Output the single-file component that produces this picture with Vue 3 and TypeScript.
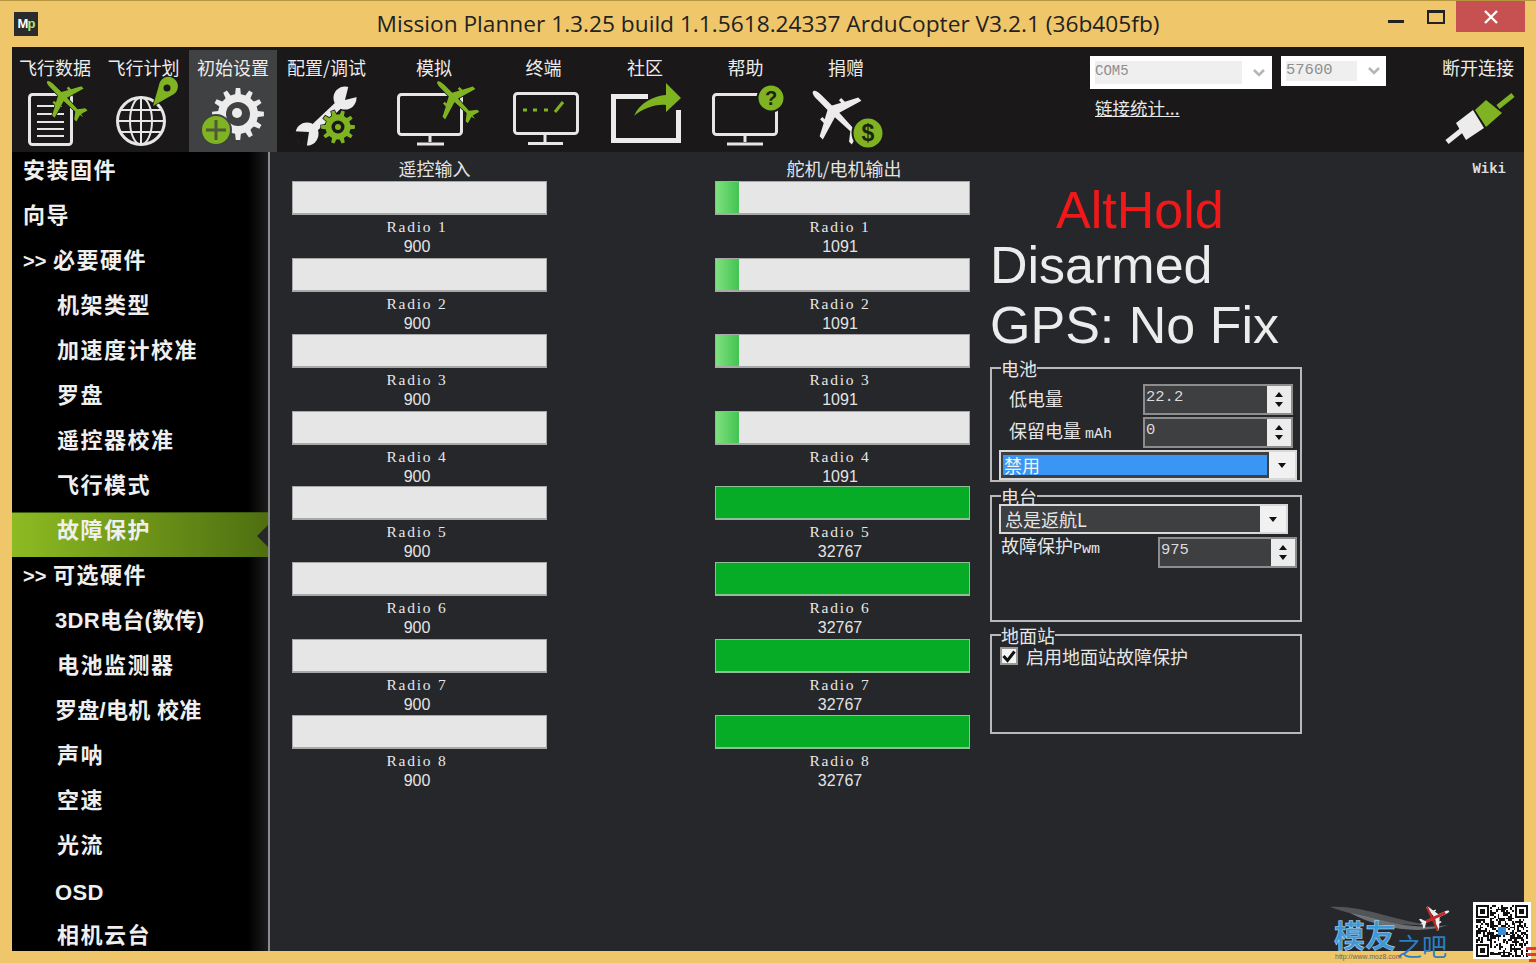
<script setup lang="ts">
function gear(cx: number, cy: number, r1: number, r2: number, n: number): string {
  let d = ''
  const step = (Math.PI * 2) / n
  for (let i = 0; i < n; i++) {
    const a = i * step
    const pts: [number, number][] = [
      [r2, a - step * 0.5],
      [r2, a - step * 0.28],
      [r1, a - step * 0.16],
      [r1, a + step * 0.16],
      [r2, a + step * 0.28],
    ]
    for (const [r, t] of pts) {
      d += (d ? 'L' : 'M') + (cx + r * Math.cos(t)).toFixed(1) + ' ' + (cy + r * Math.sin(t)).toFixed(1)
    }
  }
  return d + 'Z'
}
const setupGear = gear(238, 114, 26, 20, 12)
const configGear = gear(338, 127, 17, 12.5, 10)
const plane =
  'M0-27C1.6-27 2.4-24 2.4-20L2.4-9L9-5.5L9-8L11.5-8L11.5-4L21 1L21 4.5L2.4-1L1.6 15L8 20L8 23L0.8 21L0 25L-0.8 21L-8 23L-8 20L-1.6 15L-2.4-1L-21 4.5L-21 1L-11.5-4L-11.5-8L-9-8L-9-5.5L-2.4-9L-2.4-20C-2.4-24-1.6-27 0-27Z'

const navItems = [
  { id: 'data', label: '飞行数据', w: 86 },
  { id: 'plan', label: '飞行计划', w: 91 },
  { id: 'setup', label: '初始设置', w: 88 },
  { id: 'config', label: '配置/调试', w: 99 },
  { id: 'sim', label: '模拟', w: 116 },
  { id: 'term', label: '终端', w: 103 },
  { id: 'comm', label: '社区', w: 100 },
  { id: 'help', label: '帮助', w: 101 },
  { id: 'donate', label: '捐赠', w: 100 },
]
let left = 12
const nav = navItems.map((n) => {
  const o = { ...n, x: left }
  left += n.w
  return o
})

const menu = [
  { t: '安装固件', i: 0, h: 45 },
  { t: '向导', i: 0, h: 45 },
  { t: '必要硬件', i: 2, h: 45 },
  { t: '机架类型', i: 1, h: 45 },
  { t: '加速度计校准', i: 1, h: 45 },
  { t: '罗盘', i: 1, h: 45 },
  { t: '遥控器校准', i: 1, h: 45 },
  { t: '飞行模式', i: 1, h: 45 },
  { t: '故障保护', i: 1, h: 45, active: true },
  { t: '可选硬件', i: 2, h: 45 },
  { t: '3DR电台(数传)', i: 1, h: 45, tight: true },
  { t: '电池监测器', i: 1, h: 45 },
  { t: '罗盘/电机 校准', i: 1, h: 45, tight: true },
  { t: '声呐', i: 1, h: 45 },
  { t: '空速', i: 1, h: 45 },
  { t: '光流', i: 1, h: 47 },
  { t: 'OSD', i: 1, h: 43, tight: true },
  { t: '相机云台', i: 1, h: 45 },
]

const heights = [77, 76, 77, 75, 76, 77, 76, 76]
const inputs = heights.map((h, i) => ({ h, name: `Radio ${i + 1}`, value: '900', pct: 0, solid: false }))
const outputs = heights.map((h, i) => ({
  h,
  name: `Radio ${i + 1}`,
  value: i < 4 ? '1091' : '32767',
  pct: i < 4 ? 9 : 100,
  solid: i >= 4,
}))
const columns = [
  { title: '遥控输入', rows: inputs, cls: 'shift-a' },
  { title: '舵机/电机输出', rows: outputs, cls: 'shift-b' },
]

// QR-like mark
const qr: { x: number; y: number }[] = []
const size = 29
const finder = (x: number, y: number) => {
  for (const [fx, fy] of [[0, 0], [size - 7, 0], [0, size - 7]]) {
    const dx = x - fx
    const dy = y - fy
    if (dx >= -1 && dx <= 7 && dy >= -1 && dy <= 7) {
      if (dx < 0 || dy < 0 || dx > 6 || dy > 6) return 0
      if (dx === 0 || dy === 0 || dx === 6 || dy === 6) return 1
      if (dx === 1 || dy === 1 || dx === 5 || dy === 5) return 0
      return 1
    }
  }
  return -1
}
let seed = 12345
for (let y = 0; y < size; y++) {
  for (let x = 0; x < size; x++) {
    seed = (seed * 1103515245 + 12345) & 0x7fffffff
    const f = finder(x, y)
    const on = f === -1 ? ((seed >> 16) & 3) < 2 : f === 1
    if (on) qr.push({ x, y })
  }
}
</script>

<template>
  <div class="window">
    <header class="titlebar">
      <div class="tb-left">
        <div class="appicon">M<span>p</span></div>
      </div>
      <div class="title">Mission Planner 1.3.25 build 1.1.5618.24337 ArduCopter V3.2.1 (36b405fb)</div>
      <div class="tb-right">
        <span class="minimize"></span>
        <span class="maximize"></span>
        <span class="close">
          <svg width="16" height="14" viewBox="0 0 16 14"><path d="M2 1L14 13M14 1L2 13" stroke="#fff" stroke-width="2.4" /></svg>
        </span>
      </div>
    </header>

    <div class="client">
      <nav class="toolbar">
        <div
          v-for="n in nav"
          :key="n.id"
          class="navitem"
          :class="{ selected: n.id === 'setup' }"
          :style="{ width: n.w + 'px' }"
        >
          <div class="navlabel">{{ n.label }}</div>
          <svg class="navicon" :width="n.w" height="72" :viewBox="`${n.x} 80 ${n.w} 72`">
            <template v-if="n.id === 'data'">
              <rect x="29.5" y="94.5" width="42" height="50" rx="3" class="ln" />
              <path d="M37 106H62M37 114H64M37 122H64M37 129H64M37 136H64" class="ln thin" />
              <path :d="plane" class="gr halo" transform="translate(66 100) rotate(-45) scale(.98)" />
            </template>
            <template v-else-if="n.id === 'plan'">
              <circle cx="141" cy="121" r="23.5" class="ln" />
              <ellipse cx="141" cy="121" rx="11" ry="23.5" class="ln thin" />
              <path d="M141 97V145M118 121H165M121 110H161M121 132H161" class="ln thin" />
              <path d="M153 106L159 85A9.5 9.5 0 1 1 174 94Z" class="gr halo" />
              <circle cx="167" cy="88" r="3.5" fill="#1a1818" />
            </template>
            <template v-else-if="n.id === 'setup'">
              <path :d="setupGear" fill="#ececec" />
              <circle cx="238" cy="114" r="12" fill="#3f4143" />
              <circle cx="237" cy="113" r="5" fill="#ececec" />
              <circle cx="216" cy="130" r="15" fill="#7fb321" stroke="#3f4143" stroke-width="2" />
              <path d="M216 120V140M206 130H226" stroke="#4f5a3c" stroke-width="3" />
            </template>
            <template v-else-if="n.id === 'config'">
              <path d="M345 99L309 133" stroke="#ececec" stroke-width="8" />
              <circle cx="345" cy="98" r="11.500" fill="#ececec" />
              <path d="M345 100L350 80L365 95Z" fill="#1a1818" />
              <circle cx="307" cy="134" r="11.500" fill="#ececec" />
              <path d="M309 132L289 131L306 151Z" fill="#1a1818" />
              <path :d="configGear" class="gr halo" />
              <circle cx="338" cy="127" r="6.500" fill="#1a1818" />
              <circle cx="338" cy="127" r="3" fill="#7fb321" />
            </template>
            <template v-else-if="n.id === 'sim'">
              <rect x="398.500" y="94.500" width="63" height="40" rx="3" class="ln" />
              <path d="M430 135V142" class="ln" />
              <path d="M417 144H444" class="ln" />
              <path :d="plane" class="gr halo" transform="translate(457 101) rotate(-45) scale(1.02)" />
            </template>
            <template v-else-if="n.id === 'term'">
              <rect x="514.500" y="93.500" width="63" height="40" rx="3" class="ln" />
              <path d="M545 134V142" class="ln" />
              <path d="M528 143.500H563" class="ln" />
              <path d="M523 110H527M533 110H537M544 110H548" stroke="#7fb321" stroke-width="3" />
              <path d="M555 112L563 102" stroke="#7fb321" stroke-width="3" />
            </template>
            <template v-else-if="n.id === 'comm'">
              <path d="M648 96.500H613.500V140.500H678.500V110" fill="none" stroke="#ececec" stroke-width="5" />
              <path d="M634 116C640 102 654 96 666 95L666 83L681 98L666 112L666 105C655 104 644 108 634 116Z" fill="#7fb321" />
            </template>
            <template v-else-if="n.id === 'help'">
              <rect x="713.500" y="94.500" width="63" height="40" rx="3" class="ln" />
              <path d="M745 135V142" class="ln" />
              <path d="M727 144H763" class="ln" />
              <circle cx="771" cy="98" r="13.500" fill="#7fb321" stroke="#1a1818" stroke-width="2" />
              <text x="771" y="105" class="badge">?</text>
            </template>
            <template v-else-if="n.id === 'donate'">
              <path :d="plane" fill="#ececec" transform="translate(838 116) rotate(-45) scale(1.3)" />
              <circle cx="868" cy="133" r="15.500" fill="#7fb321" stroke="#1a1818" stroke-width="2" />
              <text x="868" y="141" class="badge big">$</text>
            </template>
          </svg>
        </div>

        <div class="connect">
          <div class="combos">
            <div class="combo wide">
              <span class="combo-text">COM5</span>
              <svg width="14" height="10" viewBox="0 0 14 10"><path d="M2 2L7 7L12 2" fill="none" stroke="#b5b5b5" stroke-width="2.500" /></svg>
            </div>
            <div class="combo narrow">
              <span class="combo-text">57600</span>
              <svg width="14" height="10" viewBox="0 0 14 10"><path d="M2 2L7 7L12 2" fill="none" stroke="#b5b5b5" stroke-width="2.500" /></svg>
            </div>
          </div>
          <a class="stats">链接统计...</a>
        </div>

        <div class="disconnect">
          <div class="navlabel">断开连接</div>
          <svg width="82" height="72" viewBox="1438 80 82 72" class="navicon">
            <path d="M1447 142L1462 130" stroke="#ececec" stroke-width="5" />
            <path d="M1456 123L1473 110L1484 128L1466 140Z" fill="#ececec" />
            <path d="M1475 110L1486 100L1502 113L1486 127Z" fill="#7fb321" />
            <path d="M1498 107L1513 95" stroke="#7fb321" stroke-width="5" />
          </svg>
        </div>
      </nav>

      <div class="body">
        <aside class="sidebar">
          <div
            v-for="m in menu"
            :key="m.t"
            class="mitem"
            :class="[{ active: m.active, tight: m.tight }, 'indent' + m.i]"
            :style="{ height: m.h + 'px' }"
          >
            <span v-if="m.i === 2" class="chev">&gt;&gt;</span>{{ m.t }}
          </div>
        </aside>

        <main class="main">
          <section v-for="c in columns" :key="c.title" class="col">
            <div class="coltitle" :class="c.cls">{{ c.title }}</div>
            <div v-for="r in c.rows" :key="r.name" class="chan" :style="{ height: r.h + 'px' }">
              <div class="bar" :class="{ solid: r.solid }">
                <div v-if="r.pct && !r.solid" class="fill" :style="{ width: r.pct + '%' }"></div>
              </div>
              <div class="rname">{{ r.name }}</div>
              <div class="rval">{{ r.value }}</div>
            </div>
          </section>

          <section class="status">
            <div class="mode">AltHold</div>
            <div class="big-line">Disarmed</div>
            <div class="big-line">GPS: No Fix</div>

            <fieldset class="box box1">
              <legend>电池</legend>
              <div class="frow">
                <span class="flabel">低电量</span>
                <div class="spin"><span>22.2</span><i class="updown"><b class="up"></b><b class="down"></b></i></div>
              </div>
              <div class="frow">
                <span class="flabel">保留电量 <small>mAh</small></span>
                <div class="spin"><span>0</span><i class="updown"><b class="up"></b><b class="down"></b></i></div>
              </div>
              <div class="select sel1">
                <span class="selval hl">禁用</span>
                <span class="drop"><b class="down"></b></span>
              </div>
            </fieldset>

            <fieldset class="box box2">
              <legend>电台</legend>
              <div class="select sel2">
                <span class="selval">总是返航L</span>
                <span class="drop"><b class="down"></b></span>
              </div>
              <div class="frow pwm">
                <span class="flabel2">故障保护<small>Pwm</small></span>
                <div class="spin spin2"><span>975</span><i class="updown"><b class="up"></b><b class="down"></b></i></div>
              </div>
            </fieldset>

            <fieldset class="box box3">
              <legend>地面站</legend>
              <div class="check">
                <span class="cb">
                  <svg width="14" height="14" viewBox="0 0 14 14"><path d="M1.500 7L5.500 11.500L12.500 2.500" fill="none" stroke="#111" stroke-width="3" /></svg>
                </span>
                启用地面站故障保护
              </div>
            </fieldset>
          </section>

          <div class="wiki">Wiki</div>
        </main>
      </div>
    </div>

    <div class="watermark">
      <svg width="130" height="40" viewBox="0 0 130 40" class="swoosh">
        <path d="M0 6C30 4 60 18 98 24C70 26 30 16 0 6Z" fill="#8a8d90" opacity=".45" />
        <path d="M20 12C50 18 80 30 118 24C90 34 50 28 20 12Z" fill="#b7b9bb" opacity=".5" />
        <path :d="plane" fill="#eee" transform="translate(104 17) rotate(65) scale(.62)" />
        <path d="M-2.400-20L2.400-20L2.400 14L-2.400 14Z" fill="#c22a2a" transform="translate(104 17) rotate(65) scale(.62)" />
        <path d="M-21 1L21 1L21 4.500L-21 4.500Z" fill="#c22a2a" transform="translate(104 17) rotate(65) scale(.62)" />
      </svg>
      <span class="wm-a">模友</span>
      <span class="wm-b">之吧</span>
      <span class="wm-url">http://www.moz8.com</span>
    </div>
    <div class="qr">
      <svg width="52" height="52" viewBox="0 0 29 29" shape-rendering="crispEdges">
        <rect v-for="(q, i) in qr" :key="i" :x="q.x" :y="q.y" width="1" height="1" fill="#111" />
        <rect x="12" y="12" width="5" height="5" fill="#3f8fd6" />
      </svg>
    </div>
    <div class="redmark"></div>
  </div>
</template>

<style scoped>
.window {
  position: relative;
  width: 1536px;
  height: 963px;
  overflow: hidden;
  background: #f0c66a;
  box-sizing: border-box;
  border-top: 1px solid #b8963f;
  font-family: "Liberation Sans", "Noto Sans CJK SC", sans-serif;
}
.titlebar {
  height: 46px;
  display: grid;
  grid-template-columns: 200px 1fr 200px;
  align-items: center;
}
.tb-left {
  padding-left: 14px;
}
.appicon {
  width: 24px;
  height: 24px;
  background: #2b2b2b;
  color: #fff;
  font: bold 13px/24px "Liberation Sans", sans-serif;
  text-align: center;
  letter-spacing: -1px;
}
.appicon span {
  color: #b9e07a;
}
.title {
  text-align: center;
  font: 22.7px/46px "Open Sans", sans-serif;
  color: #222;
  white-space: nowrap;
  height: 46px;
}
.tb-right {
  align-self: start;
  display: flex;
  justify-content: flex-end;
  padding-right: 11px;
}
.minimize {
  width: 16px;
  height: 3px;
  background: #222;
  margin: 19px 23px 0 0;
}
.maximize {
  width: 14px;
  height: 9px;
  border: 2px solid #222;
  border-top-width: 3px;
  margin: 9px 11px 0 0;
}
.close {
  width: 69px;
  height: 31px;
  background: #c75050;
  display: flex;
  align-items: center;
  justify-content: center;
}
.client {
  margin: 0 12px;
  height: 904px;
  display: flex;
  flex-direction: column;
  background: #26272a;
}
.toolbar {
  height: 105px;
  flex: none;
  display: flex;
  background: #1a1818;
  padding-top: 3px;
  box-sizing: border-box;
  position: relative;
}
.navitem {
  flex: none;
  text-align: center;
}
.navitem.selected {
  background: #3f4143;
}
.navlabel {
  color: #ececec;
  font: 18px/24px "Noto Sans CJK SC", sans-serif;
  padding-top: 5px;
  white-space: nowrap;
  height: 25px;
}
.navicon {
  display: block;
  overflow: visible;
  margin-top: 0;
}
.ln {
  fill: none;
  stroke: #e6e6e6;
  stroke-width: 3;
}
.thin {
  stroke-width: 2;
}
.gr {
  fill: #7fb321;
}
.halo {
  stroke: #1a1818;
  stroke-width: 1.5;
  paint-order: stroke;
}
.badge {
  font: bold 20px "Liberation Sans", sans-serif;
  fill: #1c2410;
  text-anchor: middle;
}
.badge.big {
  font-size: 23px;
}
.connect {
  margin: 6px 0 0 194px;
  width: 296px;
  flex: none;
}
.combos {
  display: flex;
  gap: 9px;
  align-items: flex-start;
}
.combo {
  background: #fff;
  box-sizing: border-box;
  display: flex;
  align-items: center;
  padding: 5px 5px;
}
.combo svg {
  margin-left: 10px;
}
.combo.wide {
  width: 182px;
  height: 33px;
}
.combo.narrow {
  width: 105px;
  height: 30px;
}
.combo-text {
  display: block;
  background: #efefef;
  color: #8e8e8e;
  font: 14px/20px "Liberation Mono", monospace;
  height: 100%;
  box-sizing: border-box;
}
.wide .combo-text {
  width: 147px;
}
.narrow .combo-text {
  width: 71px;
  font-size: 15.5px;
  line-height: 19px;
}
.stats {
  display: block;
  margin: 6px 0 0 5px;
  color: #e8e8e8;
  font: 17.5px/26px "Noto Sans CJK SC", sans-serif;
  text-decoration: underline;
  white-space: nowrap;
}
.disconnect {
  width: 82px;
  flex: none;
  margin-left: 52px;
  text-align: center;
}
.disconnect .navlabel {
  text-align: right;
  padding-right: 6px;
  margin-left: -20px;
}
.body {
  flex: 1;
  min-height: 0;
  display: flex;
}
.sidebar {
  width: 256px;
  flex: none;
  background: linear-gradient(90deg, #000 0, #000 236px, #1c1c1e 256px);
  overflow: hidden;
  border-right: 2px solid #8b8c8e;
}
.mitem {
  box-sizing: border-box;
  color: #efefef;
  font-weight: 700;
  font-size: 22px;
  line-height: 38px;
  letter-spacing: 1.5px;
  white-space: nowrap;
  position: relative;
}
.indent0 {
  padding-left: 11px;
}
.indent1 {
  padding-left: 45px;
}
.indent2 {
  padding-left: 11px;
}
.mitem.tight {
  letter-spacing: 0.3px;
  padding-left: 43px;
}
.chev {
  display: inline-block;
  width: 30px;
  font-size: 20px;
  letter-spacing: 0;
}
.mitem.active {
  background: linear-gradient(90deg, #8dbb22, #4f6f10);
  border-top: 1px solid #3e5a0c;
  line-height: 36px;
}
.mitem.active::after {
  content: "";
  position: absolute;
  right: 0;
  top: 12px;
  border: 11px solid transparent;
  border-right-color: #26272a;
  border-left-width: 0;
}
.main {
  flex: 1;
  min-width: 0;
  position: relative;
  display: flex;
  padding-left: 22px;
}
.col {
  width: 255px;
  flex: none;
  margin-right: 168px;
}
.col + .col {
  margin-right: 20px;
}
.coltitle {
  height: 29px;
  text-align: center;
  color: #e4e4e4;
  font: 18px/32px "Noto Sans CJK SC", sans-serif;
  box-sizing: border-box;
}
.shift-a {
  padding-left: 30px;
}
.shift-b {
  padding-left: 3px;
}
.chan {
  text-align: center;
  padding-right: 5px;
  box-sizing: border-box;
}
.bar {
  height: 34px;
  width: 255px;
  box-sizing: border-box;
  background: #e6e6e6;
  border: 1px solid #a8a8a8;
  border-width: 1px 1px 2px;
  overflow: hidden;
}
.bar.solid {
  background: #06ab26;
  border-color: #8fbf96;
}
.fill {
  height: 100%;
  background: linear-gradient(90deg, #7fe07f, #42c452);
}
.rname {
  margin-top: 2px;
  color: #e8e8e8;
  font: 15.5px/20px "Liberation Serif", serif;
  letter-spacing: 1.8px;
  height: 20px;
}
.rval {
  color: #e4e4e4;
  font: 16px/20px "Liberation Sans", sans-serif;
}
.status {
  width: 312px;
  flex: none;
  padding-top: 33px;
  color: #ececec;
}
.mode {
  color: #f01818;
  font-size: 52px;
  line-height: 50px;
  padding-left: 66px;
}
.big-line {
  font-size: 52px;
  line-height: 60px;
}
.box {
  margin: 0;
  padding: 0 0 0 7px;
  width: 312px;
  box-sizing: border-box;
  border: 2px solid #b9b9b9;
  position: relative;
  min-inline-size: 0;
}
.box legend {
  padding: 0;
  margin-left: 2px;
  font: 18px/18px "Noto Sans CJK SC", sans-serif;
  color: #e6e6e6;
}
.box1 {
  height: 123px;
  margin-top: 4px;
}
.box2 {
  height: 135px;
  margin-top: 5px;
}
.box3 {
  height: 108px;
  margin-top: 4px;
}
.frow {
  display: flex;
  align-items: center;
  height: 33px;
}
.box1 .frow:first-of-type {
  margin-top: 6px;
}
.flabel {
  width: 144px;
  padding: 0 0 4px 10px;
  box-sizing: border-box;
  color: #e6e6e6;
  font: 18px/24px "Noto Sans CJK SC", sans-serif;
  white-space: nowrap;
}
.flabel small,
.flabel2 small {
  font: 15px "Liberation Mono", monospace;
}
.flabel2 {
  width: 159px;
  padding-left: 2px;
  margin-top: -2px;
  box-sizing: border-box;
  color: #e6e6e6;
  font: 18px/22px "Noto Sans CJK SC", sans-serif;
  white-space: nowrap;
  align-self: flex-start;
}
.spin {
  width: 150px;
  height: 31px;
  box-sizing: border-box;
  border: 2px solid #8d8d8d;
  background: #3e3f41;
  display: flex;
  color: #dcdcdc;
  font: 15.5px/22px "Liberation Mono", monospace;
  padding-left: 1px;
}
.spin > span {
  flex: 1;
}
.spin2 {
  width: 139px;
  height: 31px;
}
.pwm {
  margin-top: 2px;
  height: 32px;
}
.updown {
  width: 24px;
  flex: none;
  background: #ececec;
  display: flex;
  flex-direction: column;
  justify-content: center;
  align-items: center;
  gap: 5px;
}
.up {
  width: 0;
  height: 0;
  border: 4px solid transparent;
  border-top: 0;
  border-bottom: 5px solid #111;
}
.down {
  display: block;
  width: 0;
  height: 0;
  border: 4px solid transparent;
  border-bottom: 0;
  border-top: 5px solid #111;
}
.select {
  box-sizing: border-box;
  border: 2px solid #d8d8d8;
  display: flex;
  background: #3e3f41;
}
.sel1 {
  width: 298px;
  height: 30px;
  margin-top: 1px;
  padding: 3px 0 0 2px;
}
.sel2 {
  width: 289px;
  height: 30px;
  margin-top: -1px;
}
.selval {
  flex: 1;
  color: #e6e6e6;
  font: 18px/26px "Noto Sans CJK SC", sans-serif;
  padding-left: 4px;
}
.selval.hl {
  background: #3a95f5;
  height: 20px;
  line-height: 20px;
  padding-left: 1px;
  color: #f2f2f2;
}
.drop {
  width: 26px;
  flex: none;
  background: #f1f1f1;
  display: flex;
  align-items: center;
  justify-content: center;
}
.sel1 .drop {
  margin: -3px 0 0 2px;
}
.check {
  display: flex;
  align-items: center;
  gap: 8px;
  color: #e6e6e6;
  font: 18px/22px "Noto Sans CJK SC", sans-serif;
  margin-top: 1px;
  margin-left: 1px;
}
.cb {
  width: 18px;
  height: 18px;
  box-sizing: border-box;
  background: #f4f4f4;
  border: 2px solid #999;
  display: flex;
  align-items: center;
  justify-content: center;
}
.wiki {
  position: absolute;
  right: 18px;
  top: 8px;
  color: #dcdcdc;
  font: bold 14px/18px "Liberation Mono", monospace;
}
.watermark {
  position: absolute;
  left: 1330px;
  top: 897px;
  width: 135px;
  height: 65px;
}
.swoosh {
  position: absolute;
  left: 0;
  top: 3px;
}
.wm-a {
  position: absolute;
  left: 4px;
  top: 17px;
  font: 700 31px/38px "Noto Sans CJK SC", sans-serif;
  color: #3f97d8;
  -webkit-text-stroke: 0.5px #bfe0f5;
}
.wm-b {
  position: absolute;
  left: 67px;
  top: 32px;
  font: 400 25px/30px "Noto Sans CJK SC", sans-serif;
  color: #2a7fc4;
}
.wm-url {
  position: absolute;
  left: 5px;
  top: 54px;
  font: 7px/9px "Liberation Sans", sans-serif;
  color: #6e6450;
  white-space: nowrap;
}
.qr {
  position: absolute;
  left: 1473px;
  top: 901px;
  width: 58px;
  height: 57px;
  background: #fff;
  display: flex;
  align-items: center;
  justify-content: center;
}
.redmark {
  position: absolute;
  right: 0;
  top: 946px;
  width: 10px;
  height: 3px;
  background: #e5392e;
  box-shadow: 1px 6px 0 #e5392e, 3px 12px 0 #e5392e;
}
</style>

<style>
html,
body {
  margin: 0;
  background: #f0c66a;
}
</style>
